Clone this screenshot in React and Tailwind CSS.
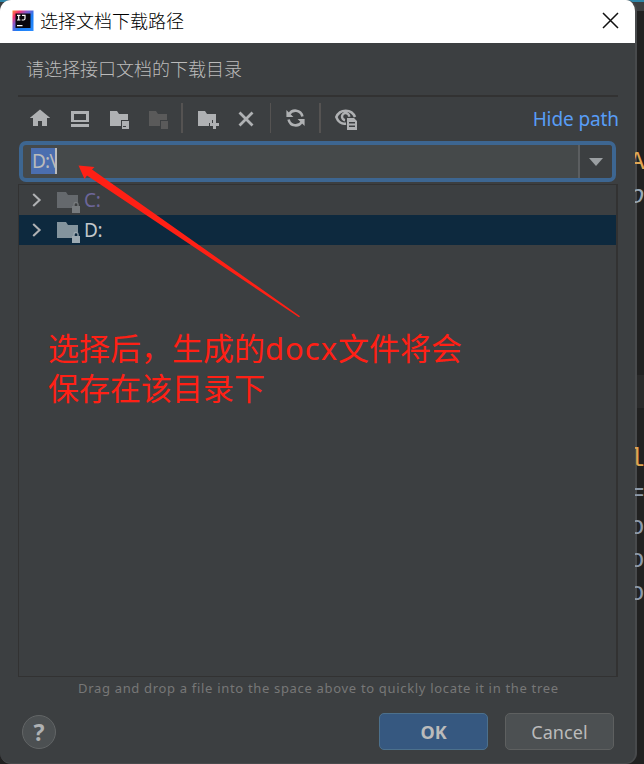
const UI = "font-['Noto_Sans','Noto_Sans_CJK_SC',sans-serif]";

function Logo() {
  return (
    <svg width="22" height="22" viewBox="0 0 22 22" className="shrink-0">
      <defs>
        <linearGradient id="ij" x1="0" y1="0" x2="1" y2="1">
          <stop offset="0" stopColor="#f9903c" />
          <stop offset=".18" stopColor="#f5316b" />
          <stop offset=".36" stopColor="#8b57c8" />
          <stop offset=".6" stopColor="#1a7df5" />
          <stop offset="1" stopColor="#2a8cff" />
        </linearGradient>
      </defs>
      <path d="M.5.5H21.5V21H.5Z" fill="url(#ij)" />
      <path d="M3.5 3.5H18.5V18H3.5Z" fill="#08060c" />
      <path d="M5 5.3H8.4M6.7 5.3V10M5 10H8.4M10 5.3H13V8.5Q13 10 11.5 10H9.7M5 15.6H10.5" stroke="#fff" strokeWidth="1.2" fill="none" />
    </svg>
  );
}

function Home() {
  return (
    <svg width="20" height="18" viewBox="0 0 20 18" fill="#afb1b3" className="-mt-[2px]">
      <path d="M10 .5 20.2 9H17V17H12V12H8V17H3V9H-.2Z" />
    </svg>
  );
}

function Desktop() {
  return (
    <svg width="18" height="16" viewBox="0 0 18 16" fill="#afb1b3">
      <path fillRule="evenodd" d="M0 0H18V11H0ZM3 3V9H15V3ZM0 13H18V16H0Z" />
    </svg>
  );
}

function Project({ color }) {
  return (
    <svg width="20" height="18" viewBox="0 0 20 18" fill={color}>
      <path d="M0 0H7L9 3H18V9H11V15H0Z" />
      <path fillRule="evenodd" d="M12 10H19V18H12ZM13 15V16H16V15Z" />
    </svg>
  );
}

function Module() {
  return (
    <svg width="20" height="18" viewBox="0 0 20 18" fill="#5a5a5a">
      <path d="M0 0H7L9 3H18V9H11V15H0Z" />
      <path d="M12 10H19V18H12Z" />
    </svg>
  );
}

function NewFolder() {
  return (
    <svg width="21" height="18" viewBox="0 0 21 18" fill="#afb1b3">
      <path d="M0 0H7L9 3H18V9H14V12H11V15H0Z" />
      <path d="M15 9H18V12H21V15H18V18H15V15H12V12H15Z" />
    </svg>
  );
}

function Delete() {
  return (
    <svg width="16" height="16" viewBox="0 0 16 16" stroke="#afb1b3" strokeWidth="2.8" className="-mt-px -ml-px">
      <path d="M1.5 1.5 14.5 14.5M14.5 1.5 1.5 14.5" />
    </svg>
  );
}

function Refresh() {
  return (
    <svg width="19" height="18" viewBox="0 0 19 18" className="-mt-[2px]">
      <path d="M3.2 5.2C6 .1 14.8.2 16.4 7.5M15.8 12.8C13 17.9 4.2 17.8 2.6 10.5" fill="none" stroke="#afb1b3" strokeWidth="2.6" />
      <path d="M.4 1V8H7.4ZM18.6 17V10H11.6Z" fill="#afb1b3" />
    </svg>
  );
}

function ShowHidden() {
  return (
    <svg width="23" height="22" viewBox="0 0 23 22" className="-ml-px">
      <path d="M11 14.5C6.5 15.5 2.8 12.3 1.3 8 4.7-.5 16.8-.5 20 8" fill="none" stroke="#afb1b3" strokeWidth="2.5" />
      <path d="M10 11.2A3.6 3.6 0 1 1 14.2 7.8" fill="none" stroke="#afb1b3" strokeWidth="2.4" />
      <path fillRule="evenodd" d="M12 9H19L22 12V21H12ZM14 13V14.5H20V13ZM14 16.5V18H20V16.5Z" fill="#afb1b3" />
    </svg>
  );
}

function Tool({ className, children }) {
  return <button className={`flex h-11 shrink-0 items-center ${className}`}>{children}</button>;
}

function Divider({ className }) {
  return <div className={`h-[30px] shrink-0 bg-[#555352] ${className}`} />;
}

function Row({ name, selected }) {
  return (
    <div className={`flex h-[30px] items-center pl-[13px] ${selected ? "bg-[#0d293e]" : ""}`}>
      <svg width="10" height="14" viewBox="0 0 10 14" fill="none" stroke="#afb1b3" strokeWidth="2.1">
        <path d="M1.2 1 7.6 7 1.2 13" />
      </svg>
      <svg width="24" height="22" viewBox="0 0 24 22" className="mt-[3px] ml-[15px]" fill={selected ? "#84949d" : "#65696d"}>
        <path d="M0 1H9L11 4H21V11H19.5Q17.5 11 17 15H15V17H0Z" />
        <path d="M17 15V13Q17 11.5 19 11.5T21 13V15" fill="none" stroke={selected ? "#9caab2" : "#777b7e"} strokeWidth="1.3" />
        <path d="M15 15H23V22H15Z" fill={selected ? "#9caab2" : "#777b7e"} />
      </svg>
      <span className={`ml-[3px] text-[19px] leading-[30px] tracking-[-0.3px] ${selected ? "text-[#c3c7ca]" : "text-[#6c6699]"}`}>{name}</span>
    </div>
  );
}

function EditorBackdrop() {
  return (
    <div className="absolute inset-0 bg-[#212121]">
      <div className="h-[2px] bg-[#2e86a8]" />
      <div className="h-[9px] bg-[#3c3f41]" />
      <div className="absolute top-[375px] right-0 h-[33px] w-[10px] bg-[#2a2a2a]" />
    </div>
  );
}

// Strip of editor code showing past the right edge of the dialog.
function EditorCode() {
  return (
    <div className="absolute top-0 left-[635px] h-[764px] w-[9px] overflow-hidden font-['Liberation_Mono',monospace] text-[26px] leading-[30px] text-[#8d9aaa]">
      <span className="absolute top-[147px] left-[-6px] text-[#e0a653]">A</span>
      <span className="absolute top-[181px] left-[-6px] text-[#9aa9b5] italic">o</span>
      <span className="absolute top-[444px] left-[-6px] text-[#e0a653]">l</span>
      <span className="absolute top-[478px] left-[-6px]">=</span>
      <span className="absolute top-[512px] left-[-6px]">o</span>
      <span className="absolute top-[545px] left-[-6px]">o</span>
      <span className="absolute top-[578px] left-[-6px]">o</span>
    </div>
  );
}

export default function App() {
  return (
    <div className={`relative h-[764px] w-[644px] overflow-hidden ${UI}`}>
      <EditorBackdrop />
      <div className="relative flex h-[764px] w-[637px] flex-col overflow-hidden rounded-[11px] border-r-2 border-b border-[#484a4c] bg-[#3c3f41]">
        <header className="flex h-[43px] shrink-0 items-center bg-white pr-[16px] pb-[2px] pl-[12px]">
          <Logo />
          <h1 className="ml-[6px] flex-1 font-['Noto_Sans_CJK_SC',sans-serif] text-[18px] font-light text-black">选择文档下载路径</h1>
          <svg width="17" height="17" viewBox="0 0 17 17" stroke="#111" strokeWidth="1.5">
            <path d="M1 1 16 16M16 1 1 16" />
          </svg>
        </header>
        <main className="flex flex-1 flex-col pr-[17px] pl-[18px]">
          <p className="h-[52px] pl-2 font-['Noto_Sans_CJK_SC',sans-serif] text-[18px] leading-[50px] font-light text-[#bbbbbb]">请选择接口文档的下载目录</p>
          <div className="h-[2px] bg-[#323232]" />
          <div className="flex h-11 items-center pl-[12px]">
            <Tool className="w-[41px]"><Home /></Tool>
            <Tool className="w-[39px]"><Desktop /></Tool>
            <Tool className="w-[39px] pt-[2px]"><Project color="#afb1b3" /></Tool>
            <Tool className="w-[32px] pt-[2px]"><Module /></Tool>
            <Divider className="-mt-[3px] mr-[15px] w-[2px]" />
            <Tool className="w-[41px] pt-[2px]"><NewFolder /></Tool>
            <Tool className="w-[31px]"><Delete /></Tool>
            <Divider className="-mt-[3px] mr-[15px] w-px" />
            <Tool className="w-[33px]"><Refresh /></Tool>
            <Divider className="-mt-[3px] mr-[15px] w-[2px]" />
            <Tool className="w-[30px] pt-[2px]"><ShowHidden /></Tool>
            <a className="mr-[-1px] ml-auto text-[19px] tracking-[-0.1px] whitespace-nowrap text-[#589df6]">Hide path</a>
          </div>
          <div className="mr-[2px] ml-px flex h-[41px] rounded-[7px] border-4 border-[#3d6691] bg-[#45494a]">
            <div className="flex flex-1 items-center pb-px pl-2">
              <span className="h-[26px] border-r-2 border-[#bbbbbb] bg-[#4b6eaf] pl-px text-[19px] leading-[26px] tracking-[-0.9px] text-[#bbbbbb]">D:\</span>
            </div>
            <button className="flex w-[34px] items-center justify-center rounded-r-[3px] border-l-2 border-[#5b5e60] bg-[#3c3f41]">
              <svg width="14" height="8" viewBox="0 0 14 8" fill="#9b9fa2"><path d="M0 0H14L7 8Z" /></svg>
            </button>
          </div>
          <div className="mt-[2px] h-[493px] border border-r-2 border-[#323232]">
            <Row name="C:" />
            <Row name="D:" selected />
          </div>
          <p className="h-[22px] pl-[60px] text-[13px] leading-[23px] tracking-[0.68px] whitespace-nowrap text-[#777777]">Drag and drop a file into the space above to quickly locate it in the tree</p>
          <footer className="mt-[14px] flex h-[37px] items-center pr-[4px] pl-1">
            <button className="flex h-[34px] w-[34px] items-center justify-center rounded-full border border-[#626566] bg-[#4c5052] pt-px text-[23px] font-bold text-[#afb1b3]">?</button>
            <button className="ml-auto h-[37px] w-[109px] rounded-[5px] border-[1.5px] border-[#4c708c] bg-[#365880] pt-[2px] text-[18px] font-bold text-[#bbbbbb]">OK</button>
            <button className="ml-[17px] h-[37px] w-[109px] rounded-[5px] border-[1.5px] border-[#5e6060] bg-[#4c5052] pt-[2px] text-[18px] tracking-[0.1px] text-[#bbbbbb]">Cancel</button>
          </footer>
        </main>
      </div>
      <EditorCode />
      <svg className="absolute top-[160px] left-[75px]" width="230" height="162" viewBox="75 160 230 162">
        <path d="M78.5 165.5 94.5 167 92 169.5 300 316.3 299 317.3 87 175.5 84.5 179Z" fill="#ff2015" />
      </svg>
      <p className="absolute top-[328px] left-[48px] font-['Noto_Sans','Noto_Sans_CJK_SC',sans-serif] text-[31px] leading-[40px] whitespace-nowrap text-[#ff2015]">
        选择后，生成的<span className="tracking-[1px]">docx</span>文件将会
        <br />
        保存在该目录下
      </p>
    </div>
  );
}
